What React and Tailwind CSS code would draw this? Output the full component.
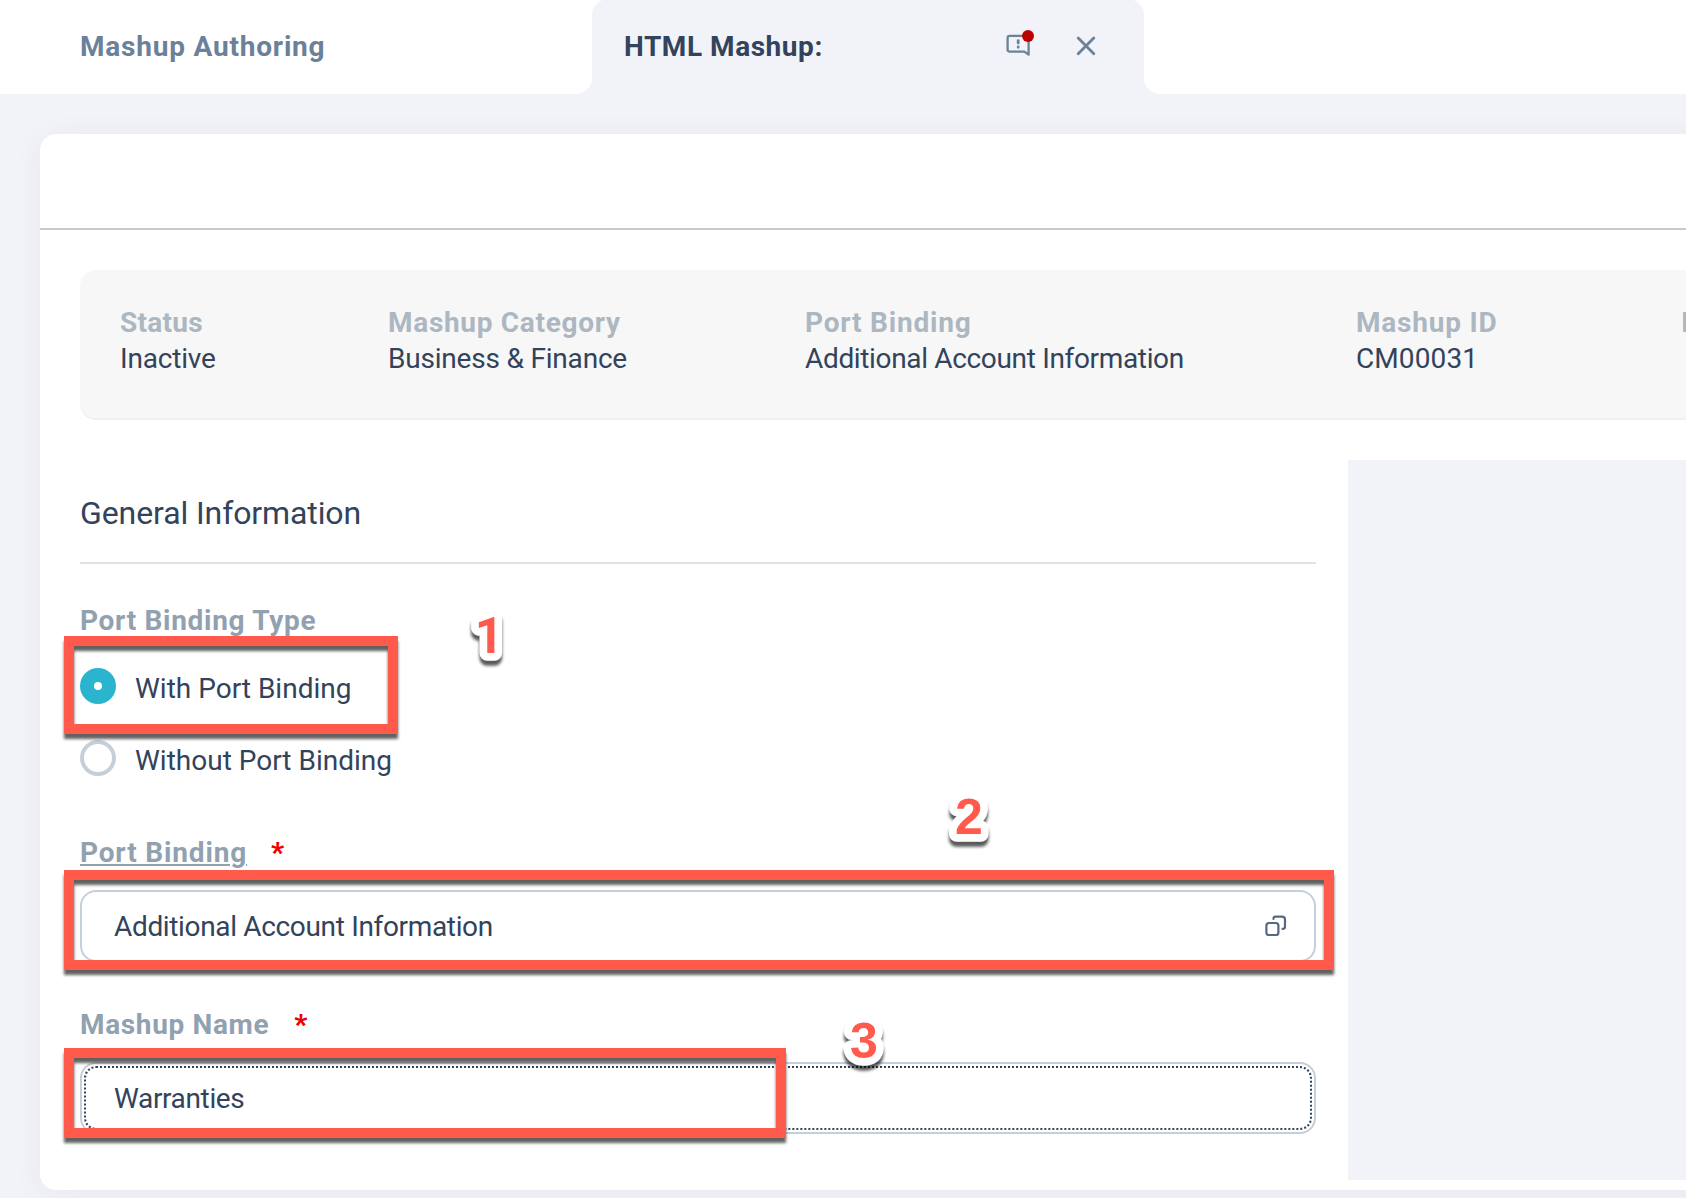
import React from "react";

function FeedbackIcon() {
  return (
    <svg width="32" height="32" viewBox="0 0 32 32" fill="none" className="block">
      <path
        d="M25.6 27.4V10.6q0-2-2-2H6.6q-2 0-2 2V22.4q0 2 2 2h14.8z"
        transform="translate(-1 1.2)"
        stroke="#6b8299"
        strokeWidth="2.3"
        strokeLinejoin="round"
      />
      <path d="M14.2 14.6v2.4M14.2 20.9v.4" stroke="#6b8299" strokeWidth="2.8" strokeLinecap="round" />
      <circle cx="24" cy="10" r="6" fill="#bb0000" />
    </svg>
  );
}

function CloseIcon() {
  return (
    <svg width="20" height="20" viewBox="0 0 20 20" fill="none" className="block">
      <path d="M2.2 2l15.6 15.8M17.8 2L2.2 17.8" stroke="#6b8299" strokeWidth="2.8" strokeLinecap="round" />
    </svg>
  );
}

function ValueHelpIcon() {
  return (
    <svg width="24" height="24" viewBox="0 0 24 24" fill="none" className="block">
      <rect x="2.4" y="9" width="12" height="12" rx="2.6" stroke="#556a82" strokeWidth="2.2" />
      <path d="M9.5 5V4.6a2 2 0 0 1 2-2H18a3 3 0 0 1 3 3v7.2a2 2 0 0 1-2 2h-.5" stroke="#556a82" strokeWidth="2.2" strokeLinecap="round" />
    </svg>
  );
}

function Header() {
  return (
    <header className="flex h-[94px] shrink-0">
      <div className="w-[592px] rounded-br-2xl bg-white pt-[29px] pl-20 text-[28px] leading-9 font-bold tracking-[0.8px] text-[#6b8199]">
        Mashup Authoring
      </div>
      <div className="w-[552px] overflow-hidden bg-white">
        <div className="-mt-px flex h-[95px] items-start rounded-t-2xl bg-[#f2f3f8] pt-[30px] pl-8">
          <div className="w-[382px] text-[28px] leading-9 font-bold tracking-[0.55px]">HTML Mashup:</div>
          <div className="-mt-[3px] -ml-0.5 w-[72px]">
            <FeedbackIcon />
          </div>
          <div className="mt-[7px]">
            <CloseIcon />
          </div>
        </div>
      </div>
      <div className="flex-1 rounded-bl-2xl bg-white" />
    </header>
  );
}

const facts = [
  { label: "Status", value: "Inactive", col: "w-[268px]", ls: "tracking-[0.3px]", vs: "tracking-[-0.2px]" },
  { label: "Mashup Category", value: "Business & Finance", col: "w-[417px]", ls: "tracking-[0.7px]", vs: "tracking-[-0.2px]" },
  { label: "Port Binding", value: "Additional Account Information", col: "w-[551px]", ls: "tracking-[0.8px]", vs: "tracking-[-0.34px]" },
  { label: "Mashup ID", value: "CM00031", col: "w-[325px]", ls: "tracking-[0.8px]", vs: "tracking-[0.1px]" },
  { label: "I", value: "", col: "w-[300px]", ls: "tracking-[0px]", vs: "tracking-[0px]" },
];

function Summary() {
  return (
    <div className="mt-10 ml-10 flex h-[150px] w-[1800px] rounded-2xl border-b-2 border-[#f0f0f0] bg-[#f7f7f7] pt-[35px] pl-10 text-[28px] leading-9">
      {facts.map((f) => (
        <div key={f.label} className={"shrink-0 whitespace-nowrap " + f.col}>
          <div className={"font-bold text-[#acb7c1] " + f.ls}>{f.label}</div>
          <div className={f.vs}>{f.value}</div>
        </div>
      ))}
    </div>
  );
}

function Asterisk() {
  return <span className="text-[28px] font-black text-[#ee0000]">*</span>;
}

function Callout({ className }) {
  return (
    <div
      className={
        "pointer-events-none absolute border-[10px] border-[#ff5a4c] [filter:drop-shadow(0_5px_1.5px_rgba(0,0,0,0.62))] " + className
      }
    />
  );
}

function Digit({ className, font = "font-['Liberation_Sans',sans-serif]", children }) {
  return (
    <svg
      width="60"
      height="70"
      viewBox="0 0 60 70"
      className={"pointer-events-none absolute [filter:drop-shadow(0_5px_1.5px_rgba(0,0,0,0.65))] " + className}
    >
      <text
        x="30"
        y="49"
        textAnchor="middle"
        stroke="#fff"
        strokeWidth="15.5"
        strokeLinejoin="round"
        strokeLinecap="round"
        className={"fill-[#ff5a4c] text-[50px] font-bold [paint-order:stroke] " + font}
      >
        {children}
      </text>
    </svg>
  );
}

function GeneralForm() {
  return (
    <section className="w-[1308px] shrink-0 pt-[33px] pr-8 pl-10">
      <h2 className="border-b-2 border-[#e2e2e2] pb-[29px] text-[32px] leading-10 tracking-[-0.1px]">General Information</h2>
      <div className="mt-[39px] text-[28px] leading-9 font-bold tracking-[0.7px] text-[#91a1b0]">Port Binding Type</div>
      <div className="mt-[11px] text-[28px] leading-9">
        <div className="flex h-[72px] items-center gap-[19px]">
          <div className="flex size-9 items-center justify-center rounded-full bg-[#2ab4cd]">
            <div className="size-2 rounded-full bg-white" />
          </div>
          <div className="pt-1.5">With Port Binding</div>
        </div>
        <div className="flex h-[72px] items-center gap-[19px]">
          <div className="size-9 rounded-full border-4 border-[#c5cfd9]" />
          <div className="pt-1.5">Without Port Binding</div>
        </div>
      </div>
      <div className="mt-[41px] flex h-9 items-start gap-6 text-[28px] leading-9">
        <span className="font-bold tracking-[0.85px] text-[#91a1b0] underline decoration-2 underline-offset-2">Port Binding</span>
        <Asterisk />
      </div>
      <div className="mt-[19px] flex h-[72px] items-center justify-between rounded-2xl border-2 border-[#c5cfd9] pr-[26px] pl-8 text-[28px] leading-9 tracking-[-0.34px]">
        <span className="pt-0.5">Additional Account Information</span>
        <ValueHelpIcon />
      </div>
      <div className="mt-[45px] flex h-9 items-start gap-[25px] text-[28px] leading-9">
        <span className="font-bold tracking-[0.65px] text-[#91a1b0]">Mashup Name</span>
        <Asterisk />
      </div>
      <div className="mt-[19px] h-[72px] rounded-2xl border-2 border-[#c5cfd9] p-0.5">
        <div className="flex h-16 items-center rounded-xl border-2 border-dotted border-[#32435b] pt-0.5 pl-7 text-[28px] leading-9 tracking-[-0.36px]">
          Warranties
        </div>
      </div>
    </section>
  );
}

export default function App() {
  return (
    <div className="relative flex h-[1198px] w-[1686px] flex-col overflow-hidden bg-[#f2f3f8] font-[Roboto,sans-serif] text-[#32435b]">
      <Header />
      <main className="mt-10 ml-10 h-[1056px] w-[1700px] shrink-0 rounded-2xl bg-white shadow-[0_4px_32px_rgba(34,53,72,0.05)]">
        <div className="h-24 border-b-2 border-[#c9c9c9]" />
        <div className="overflow-hidden">
          <Summary />
        </div>
        <div className="mt-10 flex h-[720px]">
          <GeneralForm />
          <aside className="flex-1 bg-[#f2f3f8]" />
        </div>
      </main>

      <Callout className="top-[636px] left-16 h-[98px] w-[334px]" />
      <Callout className="top-[870px] left-16 h-[100px] w-[1270px]" />
      <Callout className="top-[1048px] left-16 h-[90px] w-[722px]" />
      <Digit className="top-[604px] left-[459px]" font="font-[Roboto,sans-serif]">1</Digit>
      <Digit className="top-[785px] left-[939px]">2</Digit>
      <Digit className="top-[1009px] left-[834px]">3</Digit>
    </div>
  );
}
